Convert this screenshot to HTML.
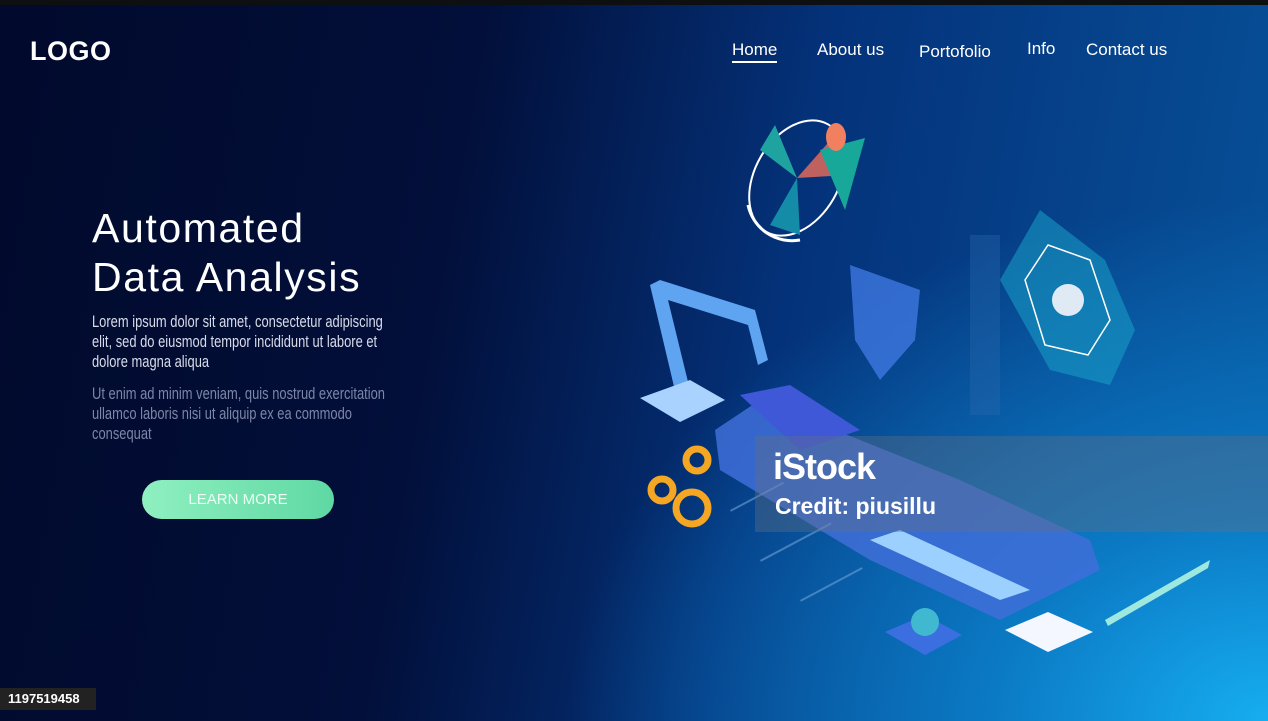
<!DOCTYPE html>
<html><head><meta charset="utf-8"><style>
*{margin:0;padding:0;box-sizing:border-box}
body{width:1268px;height:721px;overflow:hidden;font-family:"Liberation Sans",sans-serif;position:relative;
background:radial-gradient(ellipse 700px 520px at 1268px 721px,#16aef0 0%,#0b79c4 40%,rgba(6,60,140,0) 100%),linear-gradient(100deg,#010a2c 0%,#020f3a 35%,#04327a 60%,#07539b 100%);}
.top{position:absolute;left:0;top:0;width:1268px;height:5px;background:#0d0f10}
.logo{position:absolute;left:30px;top:36px;color:#fff;font-size:27px;font-weight:bold;letter-spacing:0.5px}
.nav{position:absolute;top:40px;color:#fff;font-size:17px}
h1{position:absolute;left:92px;top:204px;color:#fff;font-weight:normal;font-size:41px;line-height:49px;letter-spacing:1.6px}
.p{position:absolute;left:92px;font-size:17px;line-height:20px;transform:scaleX(0.76);transform-origin:left top;white-space:nowrap}
.btn{position:absolute;left:142px;top:480px;width:192px;height:39px;border-radius:20px;background:linear-gradient(90deg,#8ff0c0,#5fd8a4);color:#eafff5;font-size:15px;text-align:center;line-height:39px}
.wm{position:absolute;left:755px;top:436px;width:513px;height:96px;background:rgba(100,110,130,0.38)}
.id{position:absolute;left:0;top:688px;width:96px;height:22px;background:#222;color:#fff;font-size:13px;font-weight:bold;line-height:22px;padding-left:8px}
</style></head><body>
<div class="top"></div>
<div class="logo">LOGO</div>
<div class="nav" style="left:732px;border-bottom:2px solid #fff;padding-bottom:1px">Home</div>
<div class="nav" style="left:817px">About us</div>
<div class="nav" style="left:919px;top:42px">Portofolio</div>
<div class="nav" style="left:1027px;top:39px">Info</div>
<div class="nav" style="left:1086px">Contact us</div>
<h1>Automated<br>Data Analysis</h1>
<div class="p" style="top:312px;color:#d8dcea">Lorem ipsum dolor sit amet, consectetur adipiscing<br>elit, sed do eiusmod tempor incididunt ut labore et<br>dolore magna aliqua</div>
<div class="p" style="top:384px;color:#7d86a8">Ut enim ad minim veniam, quis nostrud exercitation<br>ullamco laboris nisi ut aliquip ex ea commodo<br>consequat</div>
<div class="btn">LEARN MORE</div>
<svg style="position:absolute;left:0;top:0" width="1268" height="721">
<g>
<ellipse cx="797" cy="178" rx="42" ry="62" transform="rotate(30 797 178)" fill="none" stroke="#fff" stroke-width="2"/>
<path d="M797 178 L760 150 L775 125 Z" fill="#1fa3a0"/>
<path d="M797 178 L835 135 L848 175 Z" fill="#e06a5a" opacity=".85"/>
<path d="M797 178 L800 235 L770 225 Z" fill="#148ca8"/>
<path d="M820 150 L865 138 L845 210 Z" fill="#18a89a"/>
<ellipse cx="836" cy="137" rx="10" ry="14" fill="#f08060"/>
<path d="M748 205 A45 45 0 0 0 800 240" fill="none" stroke="#fff" stroke-width="3"/>
</g>
<polygon points="1040,210 1105,260 1135,330 1110,385 1050,370 1000,280" fill="#1aa0c8" opacity=".55"/>
<polygon points="1048,245 1090,260 1110,320 1088,355 1045,345 1025,280" fill="none" stroke="#fff" stroke-width="1.5"/>
<circle cx="1068" cy="300" r="16" fill="#dfeaf5"/>
<rect x="970" y="235" width="30" height="180" fill="#2a6ab0" opacity=".35"/>
<path d="M650 285 L660 280 L755 310 L768 360 L758 365 L748 325 L668 300 L690 390 L676 395 Z" fill="#5fa4f0"/>
<path d="M640 398 L690 380 L725 400 L680 422 Z" fill="#a9d2ff"/>
<path d="M850 265 L920 290 L915 340 L880 380 L855 340 Z" fill="#3d78e0" opacity=".8"/>
<path d="M715 430 L760 400 L960 480 L1090 540 L1100 570 L1060 590 L1000 620 L870 560 L720 470 Z" fill="#3f6fd8" opacity=".85"/>
<path d="M740 395 L790 385 L860 430 L800 450 Z" fill="#3f58d8"/>
<path d="M870 540 L1000 600 L1030 590 L900 530 Z" fill="#9cd1ff"/>
<g fill="none" stroke="#f5a623" stroke-width="7">
<circle cx="692" cy="508" r="16"/><circle cx="662" cy="490" r="11"/><circle cx="697" cy="460" r="11"/>
</g>
<polygon points="1005,630 1048,612 1093,632 1048,652" fill="#f4f7ff"/>
<polygon points="885,632 925,615 962,635 925,655" fill="#3b6fe0"/>
<circle cx="925" cy="622" r="14" fill="#3fb8d0"/>
<path d="M1105 620 L1210 560 L1208 568 L1108 626 Z" fill="#9fe8e0"/>
<g fill="#6fa0d8" opacity=".6"><rect x="730" y="510" width="60" height="2" transform="rotate(-28 730 510)"/><rect x="760" y="560" width="80" height="2" transform="rotate(-28 760 560)"/><rect x="800" y="600" width="70" height="2" transform="rotate(-28 800 600)"/></g>
</svg>
<div class="wm"></div>
<div style="position:absolute;left:773px;top:446px;color:#fff;font-size:36px;font-weight:bold;letter-spacing:-1px">iStock</div>
<div style="position:absolute;left:775px;top:493px;color:#fff;font-size:23px;font-weight:bold">Credit: piusillu</div>
<div class="id">1197519458</div>
</body></html>
